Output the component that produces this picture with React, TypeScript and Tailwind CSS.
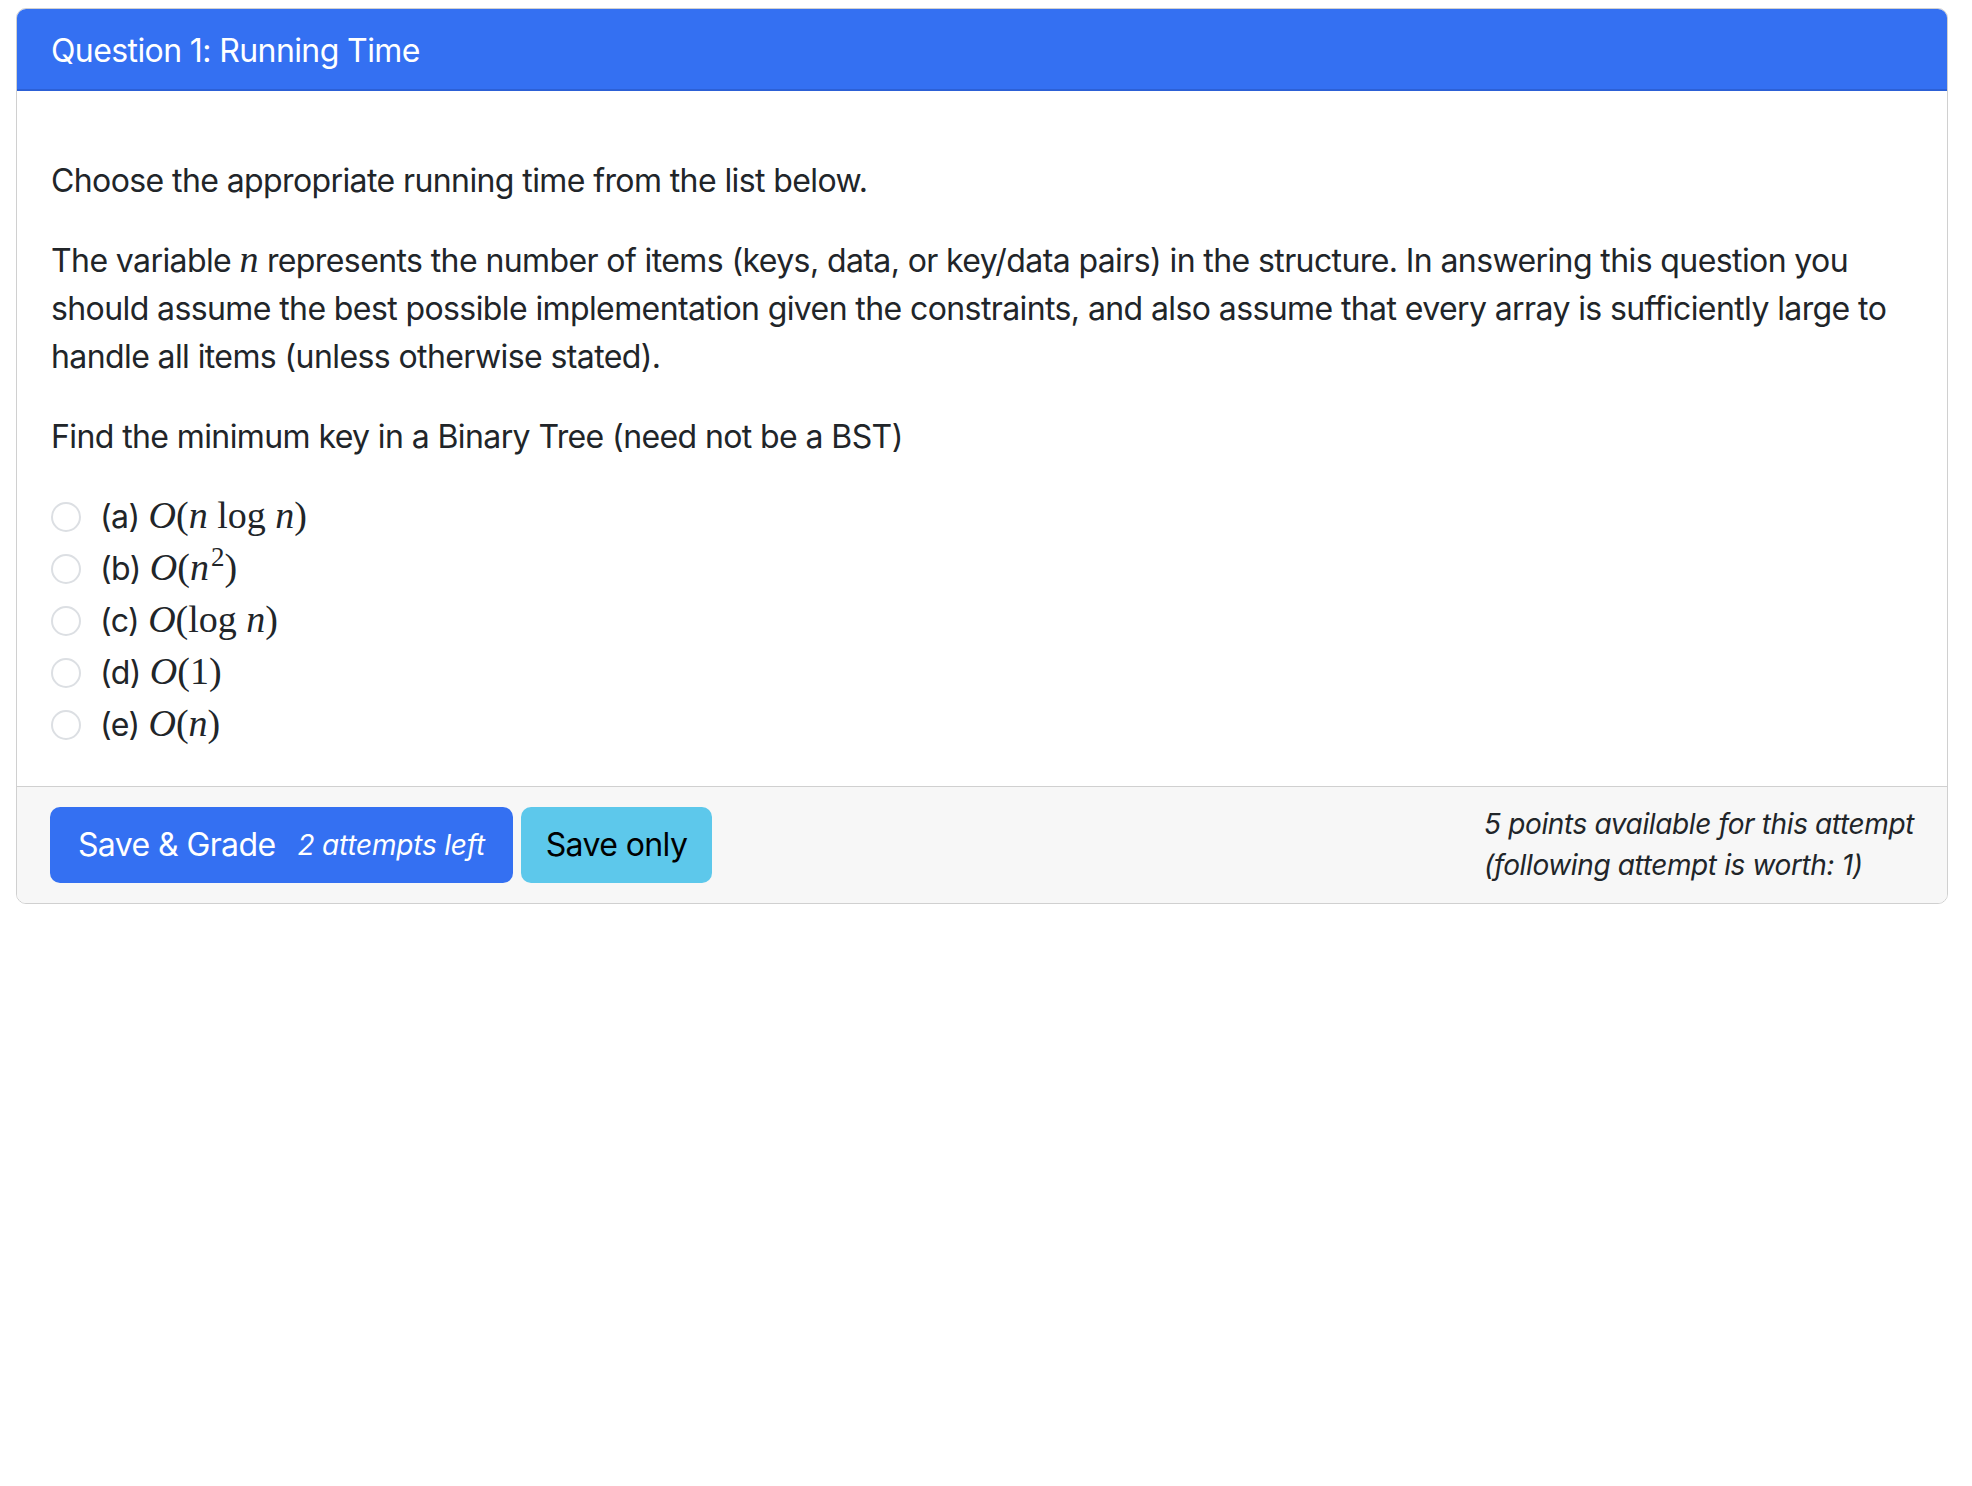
import React from "react";

const sans = { fontFamily: "Inter, 'Noto Sans', 'Liberation Sans', sans-serif" };

// small helper for the math bits (KaTeX look, no KaTeX here)
const M = ({ children }: { children: React.ReactNode }) => (
  <span className="inline-block text-[38px] leading-none tracking-normal" style={{ fontFamily: "'Liberation Serif', 'DejaVu Serif', serif" }}>
    {children}
  </span>
);
const I = ({ children }: { children: React.ReactNode }) => <i className="italic">{children}</i>;

const options = [
  { key: "a", math: <M><I>O</I>(<I>n</I> log <I>n</I>)</M> },
  { key: "b", math: <M><I>O</I>(<I>n</I><sup className="text-[27px] -top-[14px] ml-[2px]">2</sup>)</M> },
  { key: "c", math: <M><I>O</I>(log <I>n</I>)</M> },
  { key: "d", math: <M><I>O</I>(1)</M> },
  { key: "e", math: <M><I>O</I>(<I>n</I>)</M> },
];

export default function App() {
  return (
    <div className="min-h-screen bg-white pt-[8px] pl-[16px] tracking-[-0.6px]" style={sans}>
      <div className="w-[1932px] rounded-[10px] border border-[#d0d0d0] overflow-hidden">
        {/* header */}
        <div className="h-[82px] bg-[#3470f2] border-b-2 border-[#2c60d6] px-[34px] pt-[3px] flex items-center text-white text-[32px]">
          Question 1: Running Time
        </div>

        {/* body */}
        <div className="px-[34px] pt-[66px] pb-[35px] text-[#212529] text-[32px] leading-[48px]">
          <p className="mb-[32px]">Choose the appropriate running time from the list below.</p>
          <p className="mb-[32px]">
            <span>The variable </span>
            <M><I>n</I></M>
            <span> represents the number of items (keys, data, or key/data pairs) in the structure. In answering this question you</span>
            <span> should assume the best possible implementation given the constraints, and also assume that every array is sufficiently large to</span>
            <span> handle all items (unless otherwise stated).</span>
          </p>
          <p className="mb-[30px]">Find the minimum key in a Binary Tree (need not be a BST)</p>

          <div className="flex flex-col">
            {options.map((o) => (
              <label key={o.key} className="h-[52px] flex items-center">
                <span className="w-[30px] h-[30px] rounded-full border-2 border-[#dcdfe3] bg-white shrink-0" />
                <span className="ml-[19px]">({o.key})</span>
                <span className="ml-[9px]">{o.math}</span>
              </label>
            ))}
          </div>
        </div>

        {/* footer */}
        <div className="h-[117px] border-t border-[#d0d0d0] bg-[#f7f7f7] px-[33px] flex items-center justify-between">
          <div className="flex items-center gap-[8px]">
            <button className="h-[76px] w-[463px] shrink-0 whitespace-nowrap rounded-[10px] bg-[#3470f2] text-white flex items-center justify-center text-[32px]">
              <span>Save &amp; Grade</span>
              <span className="ml-[22px] italic text-[28px] tracking-[-0.2px]">2 attempts left</span>
            </button>
            <button className="h-[76px] w-[191px] shrink-0 whitespace-nowrap rounded-[10px] bg-[#5dc8eb] text-black flex items-center justify-center text-[32px]">
              Save only
            </button>
          </div>
          <div className="italic text-[28px] leading-[41px] tracking-[-0.38px] text-[#212529]">
            5 points available for this attempt
            <br />
            (following attempt is worth: 1)
          </div>
        </div>
      </div>
    </div>
  );
}
